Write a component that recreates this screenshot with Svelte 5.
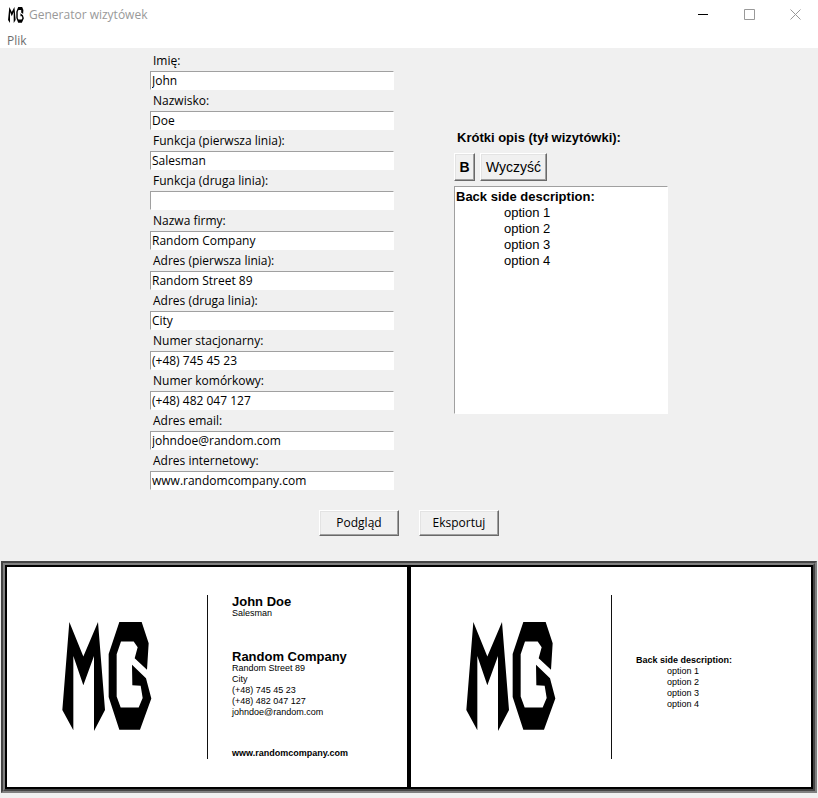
<script>
  let fields = $state([
    { id: 'first', label: 'Imię:', value: 'John' },
    { id: 'last', label: 'Nazwisko:', value: 'Doe' },
    { id: 'role1', label: 'Funkcja (pierwsza linia):', value: 'Salesman' },
    { id: 'role2', label: 'Funkcja (druga linia):', value: '' },
    { id: 'company', label: 'Nazwa firmy:', value: 'Random Company' },
    { id: 'address1', label: 'Adres (pierwsza linia):', value: 'Random Street 89' },
    { id: 'address2', label: 'Adres (druga linia):', value: 'City' },
    { id: 'phone', label: 'Numer stacjonarny:', value: '(+48) 745 45 23' },
    { id: 'mobile', label: 'Numer komórkowy:', value: '(+48) 482 047 127' },
    { id: 'email', label: 'Adres email:', value: 'johndoe@random.com' },
    { id: 'web', label: 'Adres internetowy:', value: 'www.randomcompany.com' }
  ]);
  const options = ['option 1', 'option 2', 'option 3', 'option 4'];

  const snapshot = () => Object.fromEntries(fields.map((f) => [f.id, f.value]));
  let card = $state(snapshot());
  let editor;

  function preview() {
    card = snapshot();
  }
  function bold() {
    document.execCommand('bold');
  }
  function clear() {
    editor.textContent = '';
  }
</script>

{#snippet logo()}
  <svg class="logo" viewBox="36 66 270 328" preserveAspectRatio="none" aria-hidden="true">
    <path d="M58 66 100 170 144 66 165 331 132 394V168L100 256 70 168V392L37 331Z" />
    <path d="M208 66H275L296 130 291 210 254 175 263 142 251 125H213L200 163V290L212 323H266L278 295 272 258 247 256 246 195 288 235 304 296 270 390H208L176 292V162Z" />
  </svg>
{/snippet}

<div class="window">
  <header class="titlebar">
    <span class="app-icon">{@render logo()}</span>
    <span class="title">Generator wizytówek</span>
    <div class="controls">
      <button class="min" aria-label="Minimalizuj"><svg viewBox="0 0 11 11"><path d="M0 5.5H10" /></svg></button>
      <button aria-label="Maksymalizuj"><svg viewBox="0 0 11 11"><path d="M.5 .5H10.5V10.5H.5Z" /></svg></button>
      <button aria-label="Zamknij"><svg viewBox="0 0 11 11"><path d="M.5 .5 10.5 10.5M10.5 .5 .5 10.5" /></svg></button>
    </div>
  </header>
  <nav class="menubar"><button>Plik</button></nav>

  <main>
    <div class="editor-area">
      <div class="form">
        {#each fields as field (field.id)}
          <label for={field.id}>{field.label}</label>
          <input id={field.id} type="text" bind:value={field.value} />
        {/each}
      </div>

      <section class="description">
        <h2 id="desc-label">Krótki opis (tył wizytówki):</h2>
        <div class="tools">
          <button class="raised bold" onclick={bold}>B</button>
          <button class="raised" onclick={clear}>Wyczyść</button>
        </div>
        <div class="rich" role="textbox" tabindex="0" aria-multiline="true" aria-labelledby="desc-label" contenteditable="true" bind:this={editor}>
          <div><b>Back side description:</b></div>
          {#each options as option}<div class="indent">{option}</div>{/each}
        </div>
      </section>
    </div>

    <div class="actions">
      <button class="raised" onclick={preview}>Podgląd</button>
      <button class="raised">Eksportuj</button>
    </div>

    <div class="frame">
      <div class="cards">
        <article class="card">
          <div class="mark">{@render logo()}</div>
          <div class="details front">
            <div>
              <strong>{card.first} {card.last}</strong>
              <p>{card.role1}</p>
            </div>
            <div>
              <strong>{card.company}</strong>
              <p>{card.address1}</p>
              <p>{card.address2}</p>
              <p>{card.phone}</p>
              <p>{card.mobile}</p>
              <p>{card.email}</p>
            </div>
            <p><b>{card.web}</b></p>
          </div>
        </article>
        <article class="card">
          <div class="mark">{@render logo()}</div>
          <div class="details back">
            <p><b>Back side description:</b></p>
            {#each options as option}<p class="indent">{option}</p>{/each}
          </div>
        </article>
      </div>
    </div>
  </main>
</div>

<style>
  :global(body) {
    margin: 0;
    background: #f0f0f0;
  }
  .window {
    font: 12px/20px 'Open Sans', 'Noto Sans', sans-serif;
    color: #000;
  }
  button {
    font: inherit;
    color: inherit;
    padding: 0;
    border: 0;
    background: none;
  }
  .logo {
    display: block;
    width: 100%;
    height: 100%;
  }
  .titlebar {
    display: flex;
    align-items: center;
    height: 30px;
    padding-left: 8px;
    background: #fff;
  }
  .app-icon {
    width: 16px;
    height: 16px;
    margin-right: 5px;
  }
  .title {
    color: #999;
  }
  .controls {
    display: flex;
    align-self: stretch;
    margin-left: auto;
  }
  .controls button {
    display: flex;
    justify-content: center;
    align-items: center;
    width: 46px;
    padding-bottom: 1px;
  }
  .controls svg {
    width: 11px;
    height: 11px;
    fill: none;
    stroke: #999;
  }
  .controls .min svg {
    stroke: #000;
  }
  .menubar {
    display: flex;
    align-items: center;
    height: 15px;
    padding: 3px 0 0 7px;
    background: #fff;
    color: #6d6d6d;
  }
  main {
    padding: 2px 1px 5px;
  }
  .editor-area {
    display: flex;
    justify-content: center;
    align-items: center;
    gap: 60px;
  }
  .form {
    display: flex;
    flex-direction: column;
    width: 244px;
  }
  label {
    height: 21px;
    line-height: 21px;
    padding-left: 3px;
  }
  input {
    box-sizing: border-box;
    width: 100%;
    height: 19px;
    padding: 0 1px;
    font: inherit;
    color: inherit;
  }
  input,
  .rich {
    background: #fff;
    border: 1px solid #fff;
    border-top-color: #a0a0a0;
    border-left-color: #a0a0a0;
    outline: 0;
  }
  .description {
    width: 214px;
    font-family: 'Liberation Sans', Arial, sans-serif;
    font-size: 13px;
  }
  h2 {
    margin: 0;
    padding: 1px 3px 4px;
    font-size: 13px;
    line-height: 22px;
  }
  .tools {
    display: flex;
    gap: 5px;
    margin-bottom: 5px;
    font-size: 14px;
  }
  .raised {
    border: 1px solid;
    border-color: #fff #696969 #696969 #fff;
    box-shadow: inset -1px -1px #a0a0a0, inset 1px 1px #e3e3e3;
    background: #f0f0f0;
  }
  .tools .raised {
    height: 28px;
    padding: 0 5px;
  }
  .tools .bold {
    width: 21px;
    padding: 0;
    font-weight: bold;
  }
  .rich {
    box-sizing: border-box;
    min-height: 228px;
    padding: 2px 1px;
    line-height: 16px;
  }
  .rich .indent {
    padding-left: 48px;
  }
  .actions {
    display: flex;
    justify-content: center;
    gap: 20px;
    padding: 20px 0 25px;
  }
  .actions .raised {
    width: 80px;
    height: 26px;
  }
  .frame {
    border: 2px solid;
    border-color: #444 #808080 #808080 #444;
  }
  .cards {
    display: grid;
    grid-template-columns: 1fr 1fr;
    gap: 4px;
    padding: 2px;
    background: #000;
    border: 2px solid;
    border-color: #808080 #444 #444 #808080;
  }
  .card {
    display: grid;
    grid-template-columns: 1fr 1fr;
    padding: 28px 0;
    min-height: 164px;
    background: #fff;
    font-family: 'Liberation Sans', Arial, sans-serif;
    font-size: 9px;
    line-height: 11px;
  }
  .mark {
    display: flex;
    justify-content: center;
    align-items: center;
    padding-bottom: 1px;
  }
  .mark .logo {
    width: 90px;
    height: 109px;
  }
  .details {
    display: flex;
    flex-direction: column;
    padding-left: 24px;
    border-left: 1px solid #111;
  }
  .front {
    justify-content: space-between;
  }
  .back {
    justify-content: center;
    padding-top: 11px;
  }
  .details strong {
    display: block;
    font-size: 13px;
    line-height: 13px;
  }
  .details p {
    margin: 0;
  }
  .back .indent {
    padding-left: 31px;
  }
</style>
